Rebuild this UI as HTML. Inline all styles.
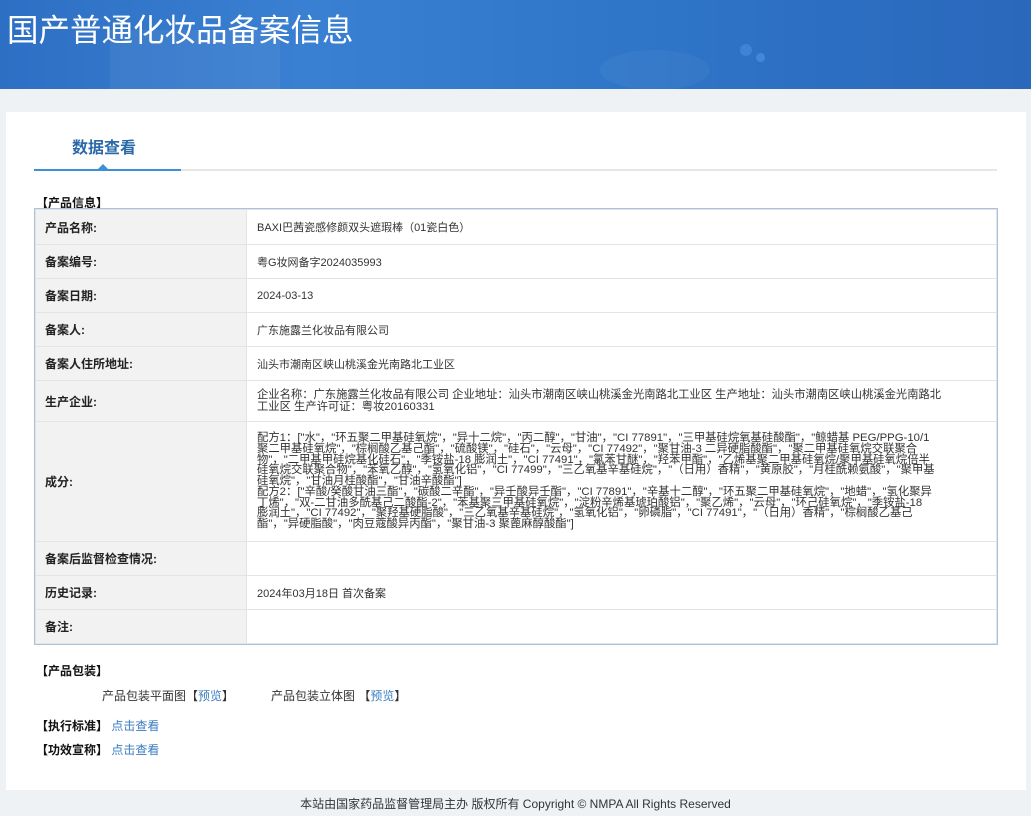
<!DOCTYPE html>
<html><head><meta charset="utf-8"><style>
*{margin:0;padding:0;box-sizing:border-box}
body{width:1031px;height:816px;background:#eef2f5;font-family:"Liberation Sans","Noto Sans CJK SC",sans-serif;color:#333;position:relative;overflow:hidden;font-size:12px}
.hd{position:absolute;left:0;top:0;width:1031px;height:89px;background:linear-gradient(90deg,#2d6fc4 0%,#3a80d2 30%,#2f76c9 60%,#2a68bb 100%);overflow:hidden}
.hd h1{position:absolute;left:7px;top:5px;font-size:31.5px;font-weight:normal;color:#fff;font-family:"Noto Sans CJK SC",sans-serif}
.card{position:absolute;left:6px;top:112px;width:1020px;height:678px;background:#fff}
.tab{position:absolute;left:72px;top:134px;font-size:16px;font-weight:bold;color:#2b6aa8}
.line{position:absolute;left:34px;top:169px;width:963px;height:2px;background:#e6e6e6}
.line2{position:absolute;left:34px;top:169px;width:147px;height:2px;background:#3d8fd6}
.tri{position:absolute;left:98px;top:164px;width:0;height:0;border-left:5px solid transparent;border-right:5px solid transparent;border-bottom:5px solid #3d8fd6}
.sec{position:absolute;font-weight:bold;color:#111;font-size:12px}
table{position:absolute;left:35px;top:209px;width:962px;border-collapse:collapse;outline:1px solid #a9c3dc}
td{border:1px solid #e3e3e3;font-size:11px;vertical-align:middle}
td.l{width:211px;background:#f2f2f2;font-weight:bold;font-size:12px;padding-left:9px;color:#222}
td.v{padding-left:10px;color:#333}
.ing div{line-height:10.8px;font-size:11.35px;white-space:nowrap}
a{color:#3a7cc0;text-decoration:none}
.ft{position:absolute;top:795px;left:0;width:1031px;text-align:center;font-size:12px;color:#333}
</style></head><body>
<div class="hd">
<div style="position:absolute;left:110px;top:30px;width:170px;height:70px;background:rgba(255,255,255,0.05)"></div>
<div style="position:absolute;left:600px;top:50px;width:110px;height:40px;border-radius:50%;background:rgba(255,255,255,0.04)"></div>
<div style="position:absolute;left:740px;top:44px;width:12px;height:12px;border-radius:50%;background:rgba(80,150,230,0.5)"></div>
<div style="position:absolute;left:756px;top:53px;width:9px;height:9px;border-radius:50%;background:rgba(80,150,230,0.6)"></div>
<h1>国产普通化妆品备案信息</h1></div>
<div class="card"></div>
<div class="tab">数据查看</div>
<div class="line"></div><div class="line2"></div><div class="tri"></div>
<div class="sec" style="left:36px;top:194px">【产品信息】</div>
<table>
<tr style="height:35px"><td class="l">产品名称:</td><td class="v">BAXI巴茜瓷感修颜双头遮瑕棒（01瓷白色）</td></tr>
<tr style="height:34px"><td class="l">备案编号:</td><td class="v">粤G妆网备字2024035993</td></tr>
<tr style="height:34px"><td class="l">备案日期:</td><td class="v">2024-03-13</td></tr>
<tr style="height:34px"><td class="l">备案人:</td><td class="v">广东施露兰化妆品有限公司</td></tr>
<tr style="height:34px"><td class="l">备案人住所地址:</td><td class="v">汕头市潮南区峡山桃溪金光南路北工业区</td></tr>
<tr style="height:41px"><td class="l">生产企业:</td><td class="v" style="line-height:12px;font-size:11.3px">企业名称：广东施露兰化妆品有限公司 企业地址：汕头市潮南区峡山桃溪金光南路北工业区 生产地址：汕头市潮南区峡山桃溪金光南路北<br>工业区 生产许可证：粤妆20160331</td></tr>
<tr style="height:120px"><td class="l">成分:</td><td class="v ing">
<div>配方1：["水"，"环五聚二甲基硅氧烷"，"异十二烷"，"丙二醇"，"甘油"，"CI 77891"，"三甲基硅烷氧基硅酸酯"，"鲸蜡基 PEG/PPG-10/1</div>
<div>聚二甲基硅氧烷"，"棕榈酸乙基己酯"，"硫酸镁"，"硅石"，"云母"，"CI 77492"，"聚甘油-3 二异硬脂酸酯"，"聚二甲基硅氧烷交联聚合</div>
<div>物"，"二甲基甲硅烷基化硅石"，"季铵盐-18 膨润土"，"CI 77491"，"氯苯甘醚"，"羟苯甲酯"，"乙烯基聚二甲基硅氧烷/聚甲基硅氧烷倍半</div>
<div>硅氧烷交联聚合物"，"苯氧乙醇"，"氢氧化铝"，"CI 77499"，"三乙氧基辛基硅烷"，"（日用）香精"，"黄原胶"，"月桂酰赖氨酸"，"聚甲基</div>
<div>硅氧烷"，"甘油月桂酸酯"，"甘油辛酸酯"]</div>
<div>配方2：["辛酸/癸酸甘油三酯"，"碳酸二辛酯"，"异壬酸异壬酯"，"CI 77891"，"辛基十二醇"，"环五聚二甲基硅氧烷"，"地蜡"，"氢化聚异</div>
<div>丁烯"，"双-二甘油多酰基己二酸酯-2"，"苯基聚三甲基硅氧烷"，"淀粉辛烯基琥珀酸铝"，"聚乙烯"，"云母"，"环己硅氧烷"，"季铵盐-18</div>
<div>膨润土"，"CI 77492"，"聚羟基硬脂酸"，"三乙氧基辛基硅烷"，"氢氧化铝"，"卵磷脂"，"CI 77491"，"（日用）香精"，"棕榈酸乙基己</div>
<div>酯"，"异硬脂酸"，"肉豆蔻酸异丙酯"，"聚甘油-3 聚蓖麻醇酸酯"]</div>
</td></tr>
<tr style="height:34px"><td class="l">备案后监督检查情况:</td><td class="v"></td></tr>
<tr style="height:34px"><td class="l">历史记录:</td><td class="v">2024年03月18日 首次备案</td></tr>
<tr style="height:34px"><td class="l">备注:</td><td class="v"></td></tr>
</table>
<div class="sec" style="left:36px;top:662px">【产品包装】</div>
<div style="position:absolute;left:102px;top:687px">产品包装平面图【<a>预览</a>】</div>
<div style="position:absolute;left:271px;top:687px">产品包装立体图 【<a>预览</a>】</div>
<div style="position:absolute;left:36px;top:717px"><b style="color:#111">【执行标准】</b> <a>点击查看</a></div>
<div style="position:absolute;left:36px;top:741px"><b style="color:#111">【功效宣称】</b> <a>点击查看</a></div>
<div class="ft">本站由国家药品监督管理局主办 版权所有 Copyright © NMPA All Rights Reserved</div>
</body></html>
